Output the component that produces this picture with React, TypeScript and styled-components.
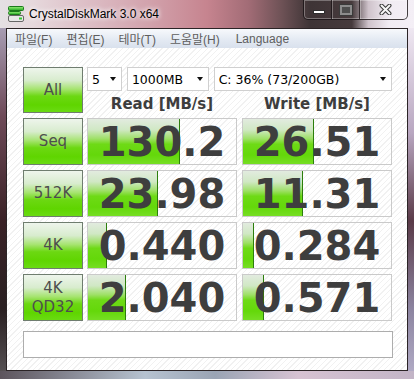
import { Fragment } from 'react';
import styled, { createGlobalStyle } from 'styled-components';

const GlobalStyle = createGlobalStyle`
  html, body {
    margin: 0;
    padding: 0;
    background: #3a3a3a;
  }
  #root {
    width: 414px;
    height: 379px;
  }
`;

const Frame = styled.div`
  box-sizing: border-box;
  width: 414px;
  height: 379px;
  padding: 0 6px 8px 6px;
  display: flex;
  flex-direction: column;
  overflow: hidden;
  background:
    linear-gradient(to right, #5c545c 0%, #8a8c98 18%, #b6c2d0 35%, #9aa4b4 52%, #d6c2d2 72%, #c2b4c6 100%) left bottom / 100% 8px no-repeat,
    linear-gradient(to bottom, #a79db3 0%, #6e4a58 25%, #3a2226 55%, #2a2022 80%, #5a5658 100%) left bottom / 6px 351px no-repeat,
    linear-gradient(to bottom, #efe8f2 0%, #b8a6c0 30%, #5a3a48 55%, #8c84a0 80%, #b4aec8 100%) right bottom / 6px 351px no-repeat,
    linear-gradient(to right, #e4e0e3 0%, #e6d8dc 8%, #dcbcc4 22%, #d2a2ac 36%, #c6848f 50%, #a26c76 60%, #6e5256 68%, #3e3436 75%, #463a3c 85%, #cfc3cb 89%, #f1ecf3 94%, #f4eff6 100%);
`;

const TitleBar = styled.div`
  height: 28px;
  flex-shrink: 0;
  display: flex;
  justify-content: space-between;
  align-items: flex-start;
`;

const TitleLeft = styled.div`
  display: flex;
  align-items: center;
  gap: 5px;
  margin: 6px 0 0 2px;
  font: 12px 'Liberation Sans', Arial, sans-serif;
  color: #000;
  text-shadow: 0 0 6px #fff, 0 0 4px #fff;
`;

const CaptionGroup = styled.div`
  display: flex;
  height: 20px;
  box-sizing: border-box;
  border: 1px solid rgba(24, 18, 20, 0.8);
  border-top: none;
  border-radius: 0 0 5px 5px;
  box-shadow: inset 0 0 0 1px rgba(255, 255, 255, 0.3);
  overflow: hidden;
`;

const CaptionButton = styled.div<{ $w: number }>`
  width: ${(p) => p.$w}px;
  display: flex;
  align-items: center;
  justify-content: center;

  & + & {
    border-left: 1px solid rgba(24, 18, 20, 0.75);
    box-shadow: inset 1px 0 rgba(255, 255, 255, 0.3);
  }
`;

const MinGlyph = styled.span`
  width: 10px;
  height: 2px;
  margin: 4px 0 0 2px;
  background: #fff;
  border: 1px solid #2e2e2e;
`;

const MaxGlyph = styled.span`
  box-sizing: border-box;
  width: 12px;
  height: 10px;
  background: #4e4e4e;
  border: 2px solid #8c8c8c;
  outline: 1px solid #3a3a3a;
`;

const Client = styled.div`
  flex: 1;
  display: flex;
  flex-direction: column;
  border: 1px solid #2b2426;
  background: repeating-linear-gradient(135deg, #ffffff 0 3px, #f1f1f1 3px 4px);
`;

const MenuBar = styled.div`
  height: 19px;
  flex-shrink: 0;
  display: flex;
  align-items: center;
  gap: 14px;
  padding-left: 8px;
  background: linear-gradient(to bottom, #f7f9fc, #e4eaf3 55%, #d9e1ed);
  font: 12px 'Liberation Sans', 'Noto Sans CJK KR', sans-serif;
  color: #5e5e5e;
`;

const MenuItem = styled.span<{ $extra?: number }>`
  margin-left: ${(p) => p.$extra ?? 0}px;
`;

const Body = styled.div`
  padding: 19px 0 0 16px;
  display: flex;
  flex-direction: column;
`;

const Grid = styled.div`
  display: grid;
  grid-template-columns: 64px 155px 150px;
  grid-template-rows: 46px repeat(4, 47px);
  row-gap: 5px;
`;

const TestButton = styled.div`
  box-sizing: border-box;
  width: 60px;
  border: 1px solid #6f7d6f;
  background: linear-gradient(
    to bottom,
    #eef5ec 0%,
    #d8ecce 28%,
    #a6e470 48%,
    #6cd812 64%,
    #5fd500 84%,
    #6adb12 100%
  );
  display: flex;
  flex-direction: column;
  align-items: center;
  justify-content: center;
  text-align: center;
  font: 15px/19px 'DejaVu Sans', sans-serif;
  color: #4e4e4e;
`;

const TopControls = styled.div`
  grid-column: 2 / 4;
  display: flex;
  flex-direction: column;
`;

const SelectRow = styled.div`
  display: flex;
  gap: 5px;
`;

const Select = styled.div<{ $w: number }>`
  box-sizing: border-box;
  width: ${(p) => p.$w}px;
  height: 24px;
  border: 1px solid #d0d0d0;
  background: #fff;
  display: flex;
  align-items: center;
  justify-content: space-between;
  padding: 0 5px 0 4px;
  font: 12.5px 'DejaVu Sans', sans-serif;
  color: #000;
`;

const Arrow = styled.span`
  width: 0;
  height: 0;
  border-left: 3px solid transparent;
  border-right: 3px solid transparent;
  border-top: 4px solid #111;
`;

const HeaderRow = styled.div`
  display: flex;
  gap: 5px;
  margin-top: 4px;
`;

const Header = styled.div`
  width: 150px;
  text-align: center;
  font: bold 15px/18px 'DejaVu Sans', sans-serif;
  color: #3d3d3d;
`;

const Cell = styled.div`
  box-sizing: border-box;
  width: 150px;
  border: 1px solid #cacaca;
  display: grid;

  & > * {
    grid-area: 1 / 1;
  }
`;

const Bar = styled.div`
  justify-self: start;
  box-sizing: border-box;
  border-right: 1px solid #2c7e0c;
  background: linear-gradient(
    to bottom,
    #e2ebdf 0%,
    #d0e8c4 24%,
    #9ee066 44%,
    #6eda16 56%,
    #64d80a 80%,
    #76de24 100%
  );
`;

const Value = styled.div`
  align-self: center;
  justify-self: center;
  font: bold 40px/1 'DejaVu Sans', sans-serif;
  color: #3e3e3e;
`;

const Comment = styled.div`
  box-sizing: border-box;
  width: 370px;
  height: 27px;
  margin-top: 10px;
  border: 1px solid #adadad;
  background: #fff;
`;

type Row = {
  label: string[];
  read: string;
  readBar: number;
  write: string;
  writeBar: number;
};

const rows: Row[] = [
  { label: ['Seq'], read: '130.2', readBar: 92, write: '26.51', writeBar: 71 },
  { label: ['512K'], read: '23.98', readBar: 70, write: '11.31', writeBar: 60 },
  { label: ['4K'], read: '0.440', readBar: 19, write: '0.284', writeBar: 11 },
  { label: ['4K', 'QD32'], read: '2.040', readBar: 38, write: '0.571', writeBar: 21 },
];

const menus = ['파일(F)', '편집(E)', '테마(T)', '도움말(H)', 'Language'];

const AppIcon = () => (
  <svg width="16" height="16" viewBox="0 0 16 16">
    <defs>
      <linearGradient id="cdmGreen" x1="0" y1="0" x2="0" y2="1">
        <stop offset="0" stopColor="#9af07a" />
        <stop offset="1" stopColor="#22a822" />
      </linearGradient>
    </defs>
    <rect x="0.5" y="0.5" width="15" height="4" rx="1" fill="url(#cdmGreen)" stroke="#1c7a1c" />
    <rect x="0.5" y="5.5" width="12" height="3" rx="1" fill="url(#cdmGreen)" stroke="#1c7a1c" />
    <rect x="0.5" y="9.5" width="15" height="6" rx="1.5" fill="#e8e8e8" stroke="#666" />
    <rect x="11" y="11.5" width="3" height="2" fill="#34c834" />
  </svg>
);

const CloseGlyph = () => (
  <svg width="13" height="11" viewBox="0 0 13 11" style={{ marginLeft: 4 }}>
    <path d="M2.5 1.5 L10.5 9.5 M10.5 1.5 L2.5 9.5" stroke="#3a3a3a" strokeWidth="4" strokeLinecap="round" />
    <path d="M2.5 1.5 L10.5 9.5 M10.5 1.5 L2.5 9.5" stroke="#f6f6f6" strokeWidth="2" strokeLinecap="round" />
  </svg>
);

const App = () => {
  return (
    <>
      <GlobalStyle />
      <Frame>
        <TitleBar>
          <TitleLeft>
            <AppIcon />
            <span>CrystalDiskMark 3.0 x64</span>
          </TitleLeft>
          <CaptionGroup>
            <CaptionButton $w={27}>
              <MinGlyph />
            </CaptionButton>
            <CaptionButton $w={27}>
              <MaxGlyph />
            </CaptionButton>
            <CaptionButton $w={47}>
              <CloseGlyph />
            </CaptionButton>
          </CaptionGroup>
        </TitleBar>

        <Client>
          <MenuBar>
            {menus.map((m, i) => (
              <MenuItem key={m} $extra={i === menus.length - 1 ? 2 : 0}>
                {m}
              </MenuItem>
            ))}
          </MenuBar>

          <Body>
            <Grid>
              <TestButton>All</TestButton>
              <TopControls>
                <SelectRow>
                  <Select $w={35}>
                    <span>5</span>
                    <Arrow />
                  </Select>
                  <Select $w={82}>
                    <span>1000MB</span>
                    <Arrow />
                  </Select>
                  <Select $w={179}>
                    <span>C: 36% (73/200GB)</span>
                    <Arrow />
                  </Select>
                </SelectRow>
                <HeaderRow>
                  <Header>Read [MB/s]</Header>
                  <Header>Write [MB/s]</Header>
                </HeaderRow>
              </TopControls>

              {rows.map((r) => (
                <Fragment key={r.read}>
                  <TestButton>
                    {r.label.map((l) => (
                      <span key={l}>{l}</span>
                    ))}
                  </TestButton>
                  <Cell>
                    <Bar style={{ width: r.readBar }} />
                    <Value>{r.read}</Value>
                  </Cell>
                  <Cell>
                    <Bar style={{ width: r.writeBar }} />
                    <Value>{r.write}</Value>
                  </Cell>
                </Fragment>
              ))}
            </Grid>
            <Comment />
          </Body>
        </Client>
      </Frame>
    </>
  );
};

export default App;
